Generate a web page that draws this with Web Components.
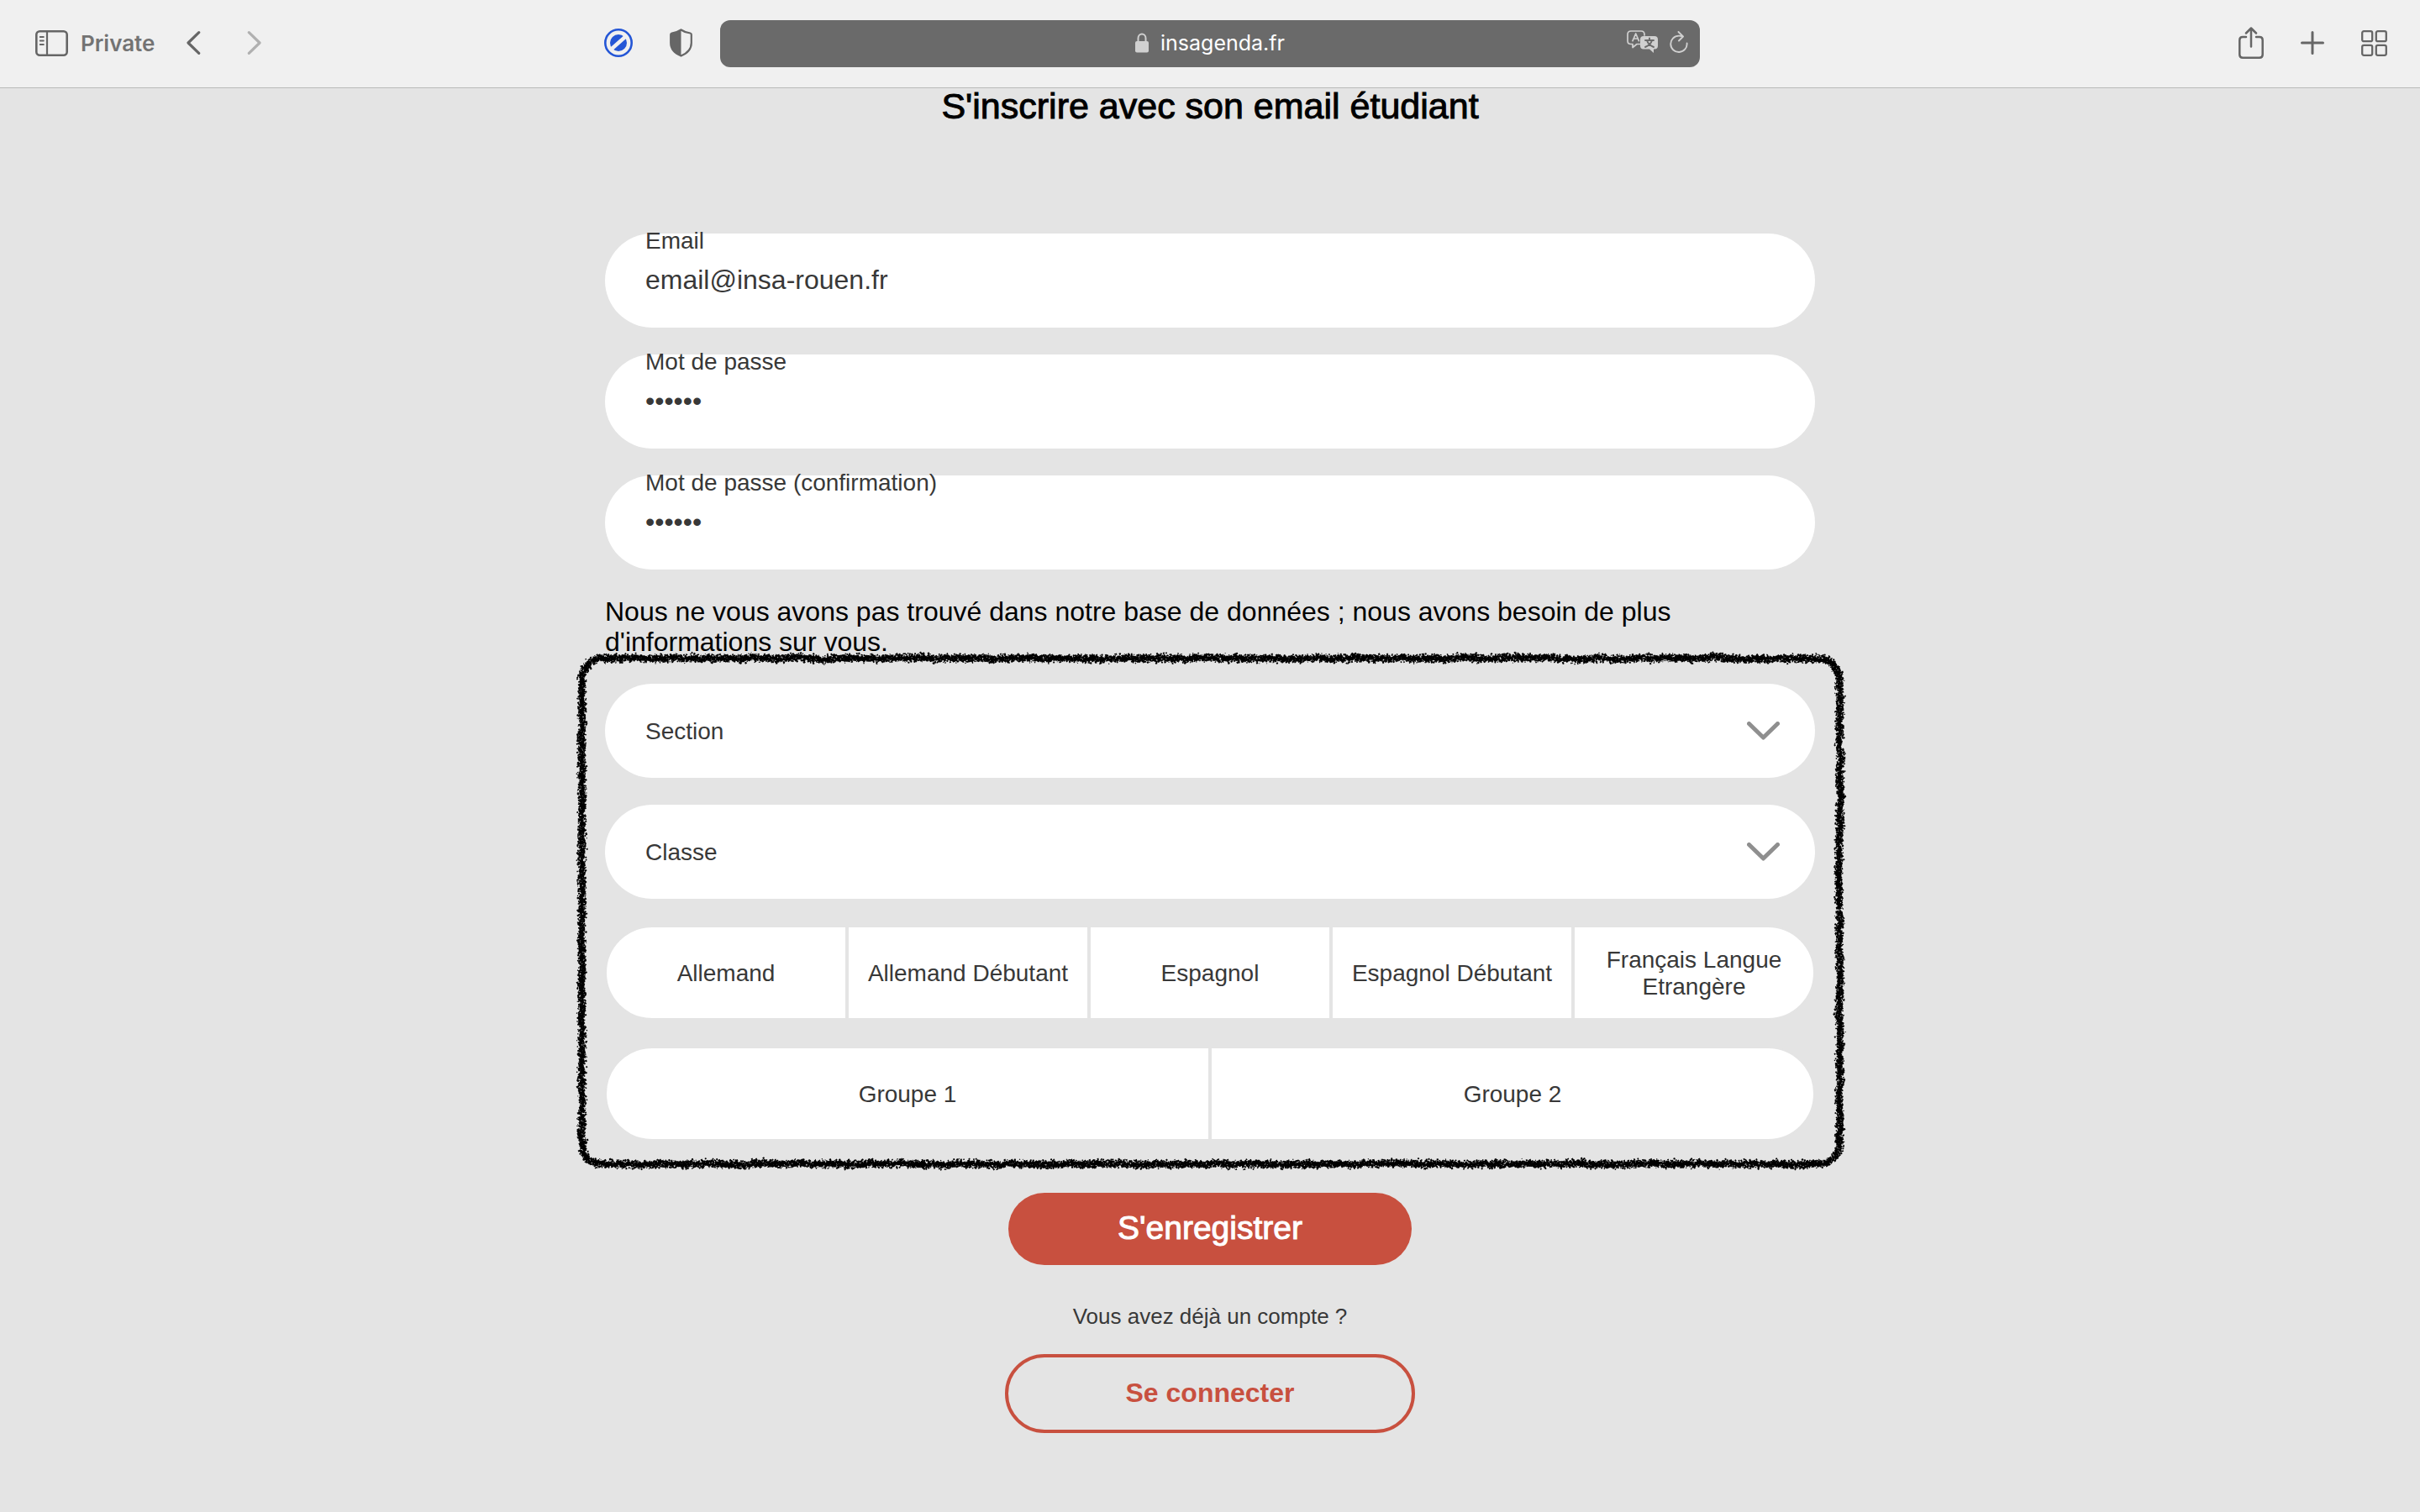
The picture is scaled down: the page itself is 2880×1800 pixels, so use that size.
<!DOCTYPE html>
<html lang="fr">
<head>
<meta charset="utf-8">
<title>INSAgenda</title>
<style>
html{background:#e4e4e4}
body{margin:0;font-family:"Liberation Sans",Arial,sans-serif;color:#000}
</style>
</head>
<body>
<browser-toolbar></browser-toolbar>
<signup-page></signup-page>
<script>
const define = (name, html, setup) => {
  const t = document.createElement('template');
  t.innerHTML = html;
  customElements.define(name, class extends HTMLElement {
    constructor() {
      super();
      this.attachShadow({mode: 'open'}).append(t.content.cloneNode(true));
    }
    connectedCallback() { if (setup) setup(this, this.shadowRoot); }
  });
};

define('browser-toolbar', `
<style>
:host{display:grid;grid-template-columns:1fr 1166px 1fr;align-items:center;height:104px;background:#f0f0f0;border-bottom:1px solid #b9bab9;font-family:Inter,"Noto Sans",sans-serif;color:#666}
button{display:flex;align-items:center;margin:0;padding:0;border:0;background:none;color:inherit;font:inherit}
svg{display:block;flex:none}
.side{display:flex;align-items:center;padding-bottom:2px}
.left{padding-left:42px;padding-right:33px}
.private{gap:15px;font-size:26px;font-weight:600;color:#737373}
.back{margin-left:38px}
.next{margin-left:55px;color:#b0b0b0}
.block{margin-left:auto;margin-right:44px}
.bar{display:grid;grid-template-columns:1fr auto 1fr;align-items:center;height:56px;padding:0 14px 2px;border-radius:12px;background:#6a6a6a;color:#d0d0d0;box-sizing:border-box}
.url{display:flex;align-items:center;gap:14px;grid-column:2;font-size:25px;color:#fff}
.tools{display:flex;justify-content:flex-end;align-items:center;gap:13px;padding-bottom:3px}
</style>
<div class="side left">
  <button class="private"><svg width="39" height="31" viewBox="0 0 39 31" fill="none" stroke="#666" stroke-linecap="round"><rect x="1.3" y="1.3" width="36.4" height="28.4" rx="4" stroke-width="2.6"/><path d="M14 1.5v28" stroke-width="2.2"/><path d="M5.7 8h4.2M5.7 12.5h4.2M5.7 17h4.2" stroke-width="1.8"/></svg>Private</button>
  <button class="back" aria-label="Précédent"><svg width="17" height="28" viewBox="0 0 17 28" fill="none" stroke="currentColor" stroke-width="3.2" stroke-linecap="round" stroke-linejoin="round"><path d="M14.7 1.7L2 14l12.700 12.300"/></svg></button>
  <button class="next" aria-label="Suivant"><svg width="17" height="28" viewBox="0 0 17 28" fill="none" stroke="currentColor" stroke-width="3.2" stroke-linecap="round" stroke-linejoin="round"><path d="M2.300 1.700L15 14 2.300 26.300"/></svg></button>
  <button class="block" aria-label="Bloqueur"><svg width="34" height="34" viewBox="0 0 34 34"><circle cx="17" cy="17" r="15.700" fill="none" stroke="#2456d6" stroke-width="2.600"/><circle cx="17" cy="17" r="10" fill="#2456d6"/><path d="M8.500 24.500L25.500 9.500" stroke="#f0f0f0" stroke-width="4.400"/></svg></button>
  <button aria-label="Confidentialité"><svg width="27" height="34" viewBox="0 0 27 34"><path d="M13.500 1.500C10 4 6 5 2.500 5.500Q1.200 5.800 1.200 7v10c0 7 5 12.500 12.300 15.500C20.700 29.500 25.800 24 25.800 17V7q0-1.200-1.300-1.500C21 5 17 4 13.500 1.500z" fill="none" stroke="#666" stroke-width="2.200"/><path d="M13.500 1.500C10 4 6 5 2.500 5.500Q1.200 5.800 1.200 7v10c0 7 5 12.500 12.300 15.500z" fill="#666"/></svg></button>
</div>
<div class="bar">
  <div class="url"><svg width="16" height="24" viewBox="0 0 16 24"><path d="M3.500 11V6.500a4.500 5 0 0 1 9 0V11" fill="none" stroke="#d0d0d0" stroke-width="2"/><rect y="10" width="16" height="13.500" rx="2" fill="#d0d0d0"/></svg><span>insagenda.fr</span></div>
  <div class="tools">
    <button aria-label="Traduire"><svg width="38" height="28" viewBox="0 0 38 28" fill="none" stroke="currentColor" stroke-width="1.700" stroke-linejoin="round" stroke-linecap="round"><path d="M15.500 16.500H12l-5 4v-4H5q-4 0-4-4V5q0-4 4-4h12q4 0 4 4v1"/><path d="M7 12.700L10.700 4l3.700 8.700M8.300 10h4.800"/><path d="M20 7h13q4 0 4 4v7.500q0 4-4 4h-1V27l-5-4.500h-7q-4 0-4-4V11q0-4 4-4z" fill="currentColor" stroke="none"/><path d="M22 12h10M27 9.500v2.500M30 12q-1.500 5.500-8 8M24 12q1.500 5.500 8 8" stroke="#6a6a6a" stroke-width="1.900"/></svg></button>
    <button aria-label="Actualiser"><svg width="22" height="26" viewBox="0 0 22 26" fill="none" stroke="currentColor" stroke-width="1.900" stroke-linecap="round" stroke-linejoin="round"><path d="M20.600 14.500A9.700 9.700 0 1 1 10.900 5.600q2.200 0 4.300.9M10.500 1l5.500 5.500-5 5"/></svg></button>
  </div>
</div>
<div class="side right" style="justify-content:flex-end;gap:44px;padding-right:39px">
  <button aria-label="Partager"><svg width="30" height="38" viewBox="0 0 30 38" fill="none" stroke="currentColor" stroke-width="2.500" stroke-linecap="round" stroke-linejoin="round"><path d="M9 12H5q-3.700 0-3.700 3.700v17.300q0 3.700 3.700 3.700h20q3.700 0 3.700-3.700V15.700q0-3.700-3.700-3.700h-4M15 23.500V2M9 7.500l6-6 6 6"/></svg></button>
  <button aria-label="Nouvel onglet"><svg width="28" height="28" viewBox="0 0 28 28" fill="none" stroke="currentColor" stroke-width="3" stroke-linecap="round"><path d="M14 1.500v25M1.500 14h25"/></svg></button>
  <button aria-label="Onglets"><svg width="31" height="31" viewBox="0 0 31 31" fill="none" stroke="currentColor" stroke-width="2.300"><rect x="1.200" y="1.200" width="12" height="12" rx="2"/><rect x="17.800" y="1.200" width="12" height="12" rx="2"/><rect x="1.200" y="17.800" width="12" height="12" rx="2"/><rect x="17.800" y="17.800" width="12" height="12" rx="2"/></svg></button>
</div>`);

define('text-field', `
<style>
:host{display:block;position:relative}
input{display:block;box-sizing:border-box;width:100%;height:112px;padding:0 48px 2px;border:0;border-radius:56px;background:#fff;color:#383838;font:32px "Liberation Sans",Arial,sans-serif;outline:0}
label{position:absolute;top:-7px;left:48px;font-size:28px;line-height:32px;color:#383838}
</style>
<label for="i"><slot></slot></label><input id="i">`, (host, root) => {
  const i = root.querySelector('input');
  i.type = host.getAttribute('type');
  i.value = host.getAttribute('value');
});

define('select-field', `
<style>
:host{display:grid;align-items:center}
select,svg{grid-area:1/1}
select{appearance:none;box-sizing:border-box;width:100%;height:112px;margin:0;padding:0 48px;border:0;border-radius:56px;background:#fff;color:#383838;font:28px "Liberation Sans",Arial,sans-serif;outline:0}
svg{justify-self:end;margin-right:42px;pointer-events:none}
</style>
<select><option></option></select>
<svg width="39" height="22" viewBox="0 0 39 22" fill="none" stroke="#8f8f8f" stroke-width="5" stroke-linecap="round" stroke-linejoin="round"><path d="M2.500 2.500L19.500 19 36.500 2.500"/></svg>`, (host, root) => {
  root.querySelector('option').textContent = host.getAttribute('label');
  root.querySelector('select').setAttribute('aria-label', host.getAttribute('label'));
});

define('choice-row', `
<style>
:host{display:block}
fieldset{display:flex;margin:0;padding:0;border:0}
label{position:relative;display:flex;flex:1 1 0;align-items:center;justify-content:center;box-sizing:border-box;min-height:112px;padding:2px 16px 0;border:2px solid #e4e4e4;background:#fff;color:#383838;font-size:28px;line-height:32px;text-align:center;cursor:pointer}
label:first-child{border-radius:56px 0 0 56px}
label:last-child{border-radius:0 56px 56px 0}
input{position:absolute;inset:0;margin:0;opacity:0}
</style>
<fieldset></fieldset>`, (host, root) => {
  const set = root.querySelector('fieldset');
  set.setAttribute('aria-label', host.getAttribute('label'));
  set.replaceChildren(...host.getAttribute('options').split('|').map(text => {
    const label = document.createElement('label');
    const input = document.createElement('input');
    input.type = 'radio';
    input.name = 'choice';
    label.append(input, text);
    return label;
  }));
});

// Charcoal outline around the slotted content, rebuilt whenever the box changes size.
define('charcoal-frame', `
<style>
:host{display:block;position:relative}
svg{position:absolute;top:-40px;left:-40px;pointer-events:none;overflow:visible}
</style>
<slot></slot><svg aria-hidden="true"><path fill="#000"/></svg>`, (host, root) => {
  const svg = root.querySelector('svg'), path = root.querySelector('path');
  const draw = () => {
    const w = host.offsetWidth + 80, h = host.offsetHeight + 80;
    svg.setAttribute('width', w);
    svg.setAttribute('height', h);
    let seed = 7;
    const rnd = () => (seed = (seed * 16807) % 2147483647) / 2147483647;
    const x0 = 12, y0 = 10, x1 = w - 11, y1 = h - 12, r = 24;
    const legs = [
      [x1 - x0 - 2 * r, s => [x0 + r + s, y0, 0, -1]],
      [r * Math.PI / 2, s => arc(x1 - r, y0 + r, -Math.PI / 2 + s / r)],
      [y1 - y0 - 2 * r, s => [x1, y0 + r + s, 1, 0]],
      [r * Math.PI / 2, s => arc(x1 - r, y1 - r, s / r)],
      [x1 - x0 - 2 * r, s => [x1 - r - s, y1, 0, 1]],
      [r * Math.PI / 2, s => arc(x0 + r, y1 - r, Math.PI / 2 + s / r)],
      [y1 - y0 - 2 * r, s => [x0, y1 - r - s, -1, 0]],
      [r * Math.PI / 2, s => arc(x0 + r, y0 + r, Math.PI + s / r)]
    ];
    function arc(cx, cy, a) {
      const c = Math.cos(a), n = Math.sin(a);
      return [cx + r * c, cy + r * n, c, n];
    }
    let d = '', drift = 0;
    legs.forEach(([len, at], leg) => {
      for (let s = 0; s < len; s += 0.5) {
        if (leg === 2 && s > 274 && s < 277) continue;
        const [x, y, nx, ny] = at(s);
        drift = drift * 0.92 + (rnd() - 0.5) * 0.8;
        for (let k = 0; k < 4; k++) {
          const off = drift + (rnd() + rnd() + rnd() - 1.5) * 4.4;
          const along = rnd() * 2 - 1;
          const size = 0.8 + rnd() * 1.2;
          const px = x + nx * off - ny * along - size / 2, py = y + ny * off + nx * along - size / 2;
          d += 'M' + px.toFixed(1) + ' ' + py.toFixed(1) + 'l' + size.toFixed(1) + ' ' + (-size / 2).toFixed(1) + ' ' + (size / 2).toFixed(1) + ' ' + size.toFixed(1) + ' ' + (-size).toFixed(1) + ' ' + (size / 2).toFixed(1) + 'z';
        }
      }
    });
    path.setAttribute('d', d);
  };
  draw();
  new ResizeObserver(draw).observe(host);
});

define('signup-page', `
<style>
:host{display:block;width:50%;margin:0 auto}
h1{margin:0;font-size:43px;font-weight:400;line-height:42px;text-align:center;padding-bottom:131px;-webkit-text-stroke:1px}
form,.stack{display:flex;flex-direction:column;gap:32px}
p{margin:0;font-size:32px;line-height:36px}
.foot{display:flex;flex-direction:column;align-items:center;padding:30px 0 94px}
button{box-sizing:content-box;width:480px;height:84px;padding:0 0 2px;border:0;border-radius:47px;font-family:inherit}
.primary{background:#c8503f;color:#fff;font-size:39px;-webkit-text-stroke:1px}
.secondary{border:4px solid #c8503f;background:none;color:#c8503f;font-size:32px;font-weight:700}
.foot p{font-size:26px;line-height:30px;color:#383838;margin:46px 0 30px}
</style>
<h1>S'inscrire avec son email étudiant</h1>
<form>
  <text-field type="email" value="email@insa-rouen.fr">Email</text-field>
  <text-field type="password" value="secret">Mot de passe</text-field>
  <text-field type="password" value="secret">Mot de passe (confirmation)</text-field>
  <p>Nous ne vous avons pas trouvé dans notre base de données ; nous avons besoin de plus d'informations sur vous.</p>
  <charcoal-frame>
    <div class="stack">
      <select-field label="Section"></select-field>
      <select-field label="Classe"></select-field>
      <choice-row label="Langue" options="Allemand|Allemand Débutant|Espagnol|Espagnol Débutant|Français Langue Etrangère"></choice-row>
      <choice-row label="Groupe" options="Groupe 1|Groupe 2"></choice-row>
    </div>
  </charcoal-frame>
  <div class="foot">
    <button class="primary" type="submit">S'enregistrer</button>
    <p>Vous avez déjà un compte ?</p>
    <button class="secondary" type="button">Se connecter</button>
  </div>
</form>`);
</script>
</body>
</html>
